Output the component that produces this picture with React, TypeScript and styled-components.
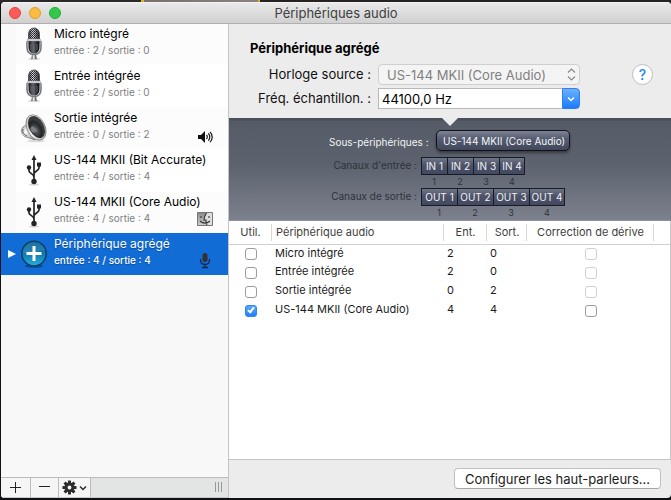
import React from "react";
import styled, { createGlobalStyle, css } from "styled-components";

const GlobalStyle = createGlobalStyle`
  *, *::before, *::after { box-sizing: border-box; }
  body {
    margin: 0;
    background: #17181a;
    font-family: Inter, "Liberation Sans", sans-serif;
    font-size: 13px;
    color: #1a1a1a;
  }
  button, input, select { font: inherit; color: inherit; margin: 0; }
`;

const Desktop = styled.div`
  min-height: 100vh;
  padding: 2px 0 2px 1px;
  display: flex;
  background: linear-gradient(90deg, #2a2a2b 141px, #e0b020 141px, #e0b020 144px, #77706b 144px, #8a827c 258px, #e0b020 258px, #e0b020 260px, #242322 260px) top / 100% 3px no-repeat, #101114;
`;

const Window = styled.main`
  flex: 1;
  min-width: 0;
  display: flex;
  flex-direction: column;
  border-radius: 4px;
  overflow: hidden;
  background: #ececec;
`;

const TitleBar = styled.header`
  position: relative;
  z-index: 1;
  flex: none;
  height: 22px;
  display: grid;
  grid-template-columns: 1fr auto 1fr;
  align-items: center;
  padding: 0 8px;
  background: linear-gradient(#e9e9e9, #d0d0d0);
  border-top: 1px solid #f4f4f4;
  border-bottom: 1px solid #b0b0b0;
`;

const Lights = styled.div`
  display: flex;
  gap: 8px;
`;

const Light = styled.button<{ $fill: string; $edge: string }>`
  width: 12px;
  height: 12px;
  padding: 0;
  border-radius: 50%;
  border: 1px solid ${(p) => p.$edge};
  background: ${(p) => p.$fill};
`;

const Title = styled.h1`
  margin: 0;
  font-size: 13px;
  line-height: 16px;
  font-weight: 400;
  color: #404040;
`;

const Body = styled.div`
  flex: 1;
  min-height: 0;
  display: flex;
`;

const Sidebar = styled.nav`
  flex: 0 0 228px;
  min-width: 0;
  display: flex;
  flex-direction: column;
  background: #f8f8f8;
  border-right: 1px solid #c4c4c4;
`;

const DeviceList = styled.ul`
  flex: 1;
  margin: -1px 0 0;
  padding: 0;
  list-style: none;
`;

const DeviceItem = styled.li<{ $selected: boolean; $shaded: boolean }>`
  height: 42px;
  display: grid;
  grid-template-columns: 15px 36px minmax(0, 1fr) 16px;
  padding-right: 15px;
  background: linear-gradient(90deg, #f9f9f9 15px, ${(p) => (p.$shaded ? "#fcfcfc" : "#ffffff")} 15px);
  color: #000;
  ${(p) =>
    p.$selected &&
    css`
      background: #116cd6;
      color: #fff;
      text-shadow: 0 1px 1px rgba(0, 0, 0, 0.3);
    `}
`;

const Disclosure = styled.span`
  display: flex;
  align-items: center;
  justify-content: flex-end;
`;

const IconCell = styled.span`
  display: flex;
  align-items: center;
  justify-content: center;
`;

const DeviceText = styled.div`
  padding: 3px 0 0 2px;
  white-space: nowrap;
`;

const DeviceName = styled.div`
  font-size: 12px;
  line-height: 16px;
`;

const DeviceInfo = styled.div<{ $selected: boolean }>`
  font-size: 10px;
  line-height: 16px;
  color: ${(p) => (p.$selected ? "#fff" : "#808080")};
  font-weight: ${(p) => (p.$selected ? 500 : 400)};
`;

const StatusCell = styled.span`
  display: flex;
  align-items: flex-end;
  justify-content: center;
  padding-bottom: 6px;
`;

const Toolbar = styled.div`
  flex: none;
  height: 21px;
  display: flex;
  border-top: 1px solid #bcbcbc;
  border-bottom: 1px solid #c8c8c8;
  background: #e3e5e4;
`;

const ToolButton = styled.button<{ $width: number }>`
  width: ${(p) => p.$width}px;
  padding: 0;
  display: flex;
  align-items: center;
  justify-content: center;
  gap: 2px;
  border: 0;
  border-right: 1px solid #bcbcbc;
  background: #f5f5f5;
`;

const Grip = styled.span`
  width: 7px;
  height: 10px;
  margin: 4px 6px 0 auto;
  border-left: 1px solid #999;
  border-right: 1px solid #999;
  background: linear-gradient(#999, #999) center / 1px 100% no-repeat;
`;

const Detail = styled.section`
  flex: 1;
  min-width: 0;
  display: flex;
  flex-direction: column;
`;

const Settings = styled.form`
  flex: none;
  height: 94px;
  padding: 16px 18px 0 21px;
`;

const Heading = styled.h2`
  margin: 0 0 8px;
  font-size: 13px;
  line-height: 16px;
  font-weight: 700;
  color: #000;
`;

const Fields = styled.div`
  display: grid;
  grid-template-columns: 121px 202px 1fr;
  column-gap: 7px;
  row-gap: 3px;
  align-items: center;
`;

const FieldLabel = styled.label`
  text-align: right;
  line-height: 21px;
  color: #101010;
  white-space: nowrap;
`;

const SelectBox = styled.div`
  display: grid;
  align-items: center;
  > * { grid-area: 1 / 1; }
  > svg { justify-self: end; margin-right: 4px; pointer-events: none; }
`;

const ClockSelect = styled.select`
  appearance: none;
  width: 100%;
  height: 21px;
  padding: 0 20px 0 8px;
  border: 1px solid #cfcfcf;
  border-radius: 4px;
  background: #f4f4f4;
  color: #808080;
  opacity: 1;
`;

const ComboBox = styled.div`
  display: flex;
  height: 21px;
`;

const RateInput = styled.input`
  flex: 1;
  min-width: 0;
  padding: 0 3px;
  border: 1px solid #b8b8b8;
  border-right: 0;
  border-radius: 0;
  background: #fff;
  color: #000;
  outline: 0;
`;

const ComboButton = styled.button`
  width: 18px;
  padding: 0;
  display: flex;
  align-items: center;
  justify-content: center;
  border: 1px solid #2f7ff0;
  border-radius: 0 4px 4px 0;
  background: linear-gradient(#6bb1fa, #1a7cfc);
`;

const HelpButton = styled.button`
  justify-self: end;
  width: 21px;
  height: 21px;
  padding: 0;
  border: 1px solid #bdbdbd;
  border-radius: 50%;
  background: #fff;
  color: #1a82fb;
  font-size: 14px;
  line-height: 18px;
  font-weight: 500;
`;

const Channels = styled.div`
  position: relative;
  flex: none;
  height: 103px;
  padding: 12px 8px 0 96px;
  display: grid;
  grid-template-columns: max-content 1fr;
  grid-template-rows: 27px 31px 31px;
  background: linear-gradient(#444b57, #555b67 4px, #5c626e 45%, #7c818d);
  border-bottom: 1px solid #8d919b;
  color: #2e323b;
  font-size: 10px;
  white-space: nowrap;
`;

const Pointer = styled.svg`
  position: absolute;
  top: 0;
  left: 213px;
`;

const ChannelLabel = styled.span<{ $main?: boolean }>`
  min-width: ${(p) => (p.$main ? 107 : 96)}px;
  padding-right: ${(p) => (p.$main ? 0 : 15)}px;
  line-height: ${(p) => (p.$main ? 24 : 16)}px;
  text-align: ${(p) => (p.$main ? "left" : "right")};
  color: ${(p) => (p.$main ? "#f2f3f5" : "inherit")};
  padding-left: ${(p) => (p.$main ? 4 : 0)}px;
`;

const SubDevice = styled.button`
  justify-self: start;
  margin-left: 4px;
  height: 21px;
  padding: 0 4px 0 6px;
  border: 1px solid #10131a;
  border-radius: 5px;
  background: linear-gradient(#7d8494, #565d70 40%, #41475c);
  box-shadow: 0 2px 3px rgba(0, 0, 0, 0.4);
  color: #f4f5f8;
  font-size: 10px;
  line-height: 18px;
`;

const Plugs = styled.div<{ $cell: number }>`
  margin-left: -11px;
  justify-self: start;
  display: grid;
  grid-template-columns: repeat(4, ${(p) => p.$cell}px);
  text-align: center;
`;

const Plug = styled.span`
  height: 18px;
  line-height: 16px;
  border: 1px solid #171b23;
  border-right-width: 0;
  background: linear-gradient(#6f7687, #4d5468 45%, #424860);
  color: #f0f1f4;
  &:nth-child(4) { border-right-width: 1px; }
`;

const PlugNumber = styled.span`
  font-size: 9px;
  line-height: 13px;
`;

const TablePane = styled.div`
  flex: 1;
  background: #fff;
  border-right: 1px solid #c8c8c8;
  border-bottom: 1px solid #c4c4c4;
`;

const Table = styled.table`
  width: 100%;
  table-layout: fixed;
  border-collapse: collapse;
  font-size: 11px;
`;

const Column = styled.col<{ $width?: number }>`
  width: ${(p) => (p.$width ? `${p.$width}px` : "auto")};
`;

const HeadCell = styled.th<{ $left?: boolean }>`
  height: 23px;
  padding: 0 4px;
  font-weight: 400;
  color: #404040;
  white-space: nowrap;
  text-align: ${(p) => (p.$left ? "left" : "center")};
  border-bottom: 1px solid #d0d0d0;
  background: linear-gradient(#d8d8d8, #d8d8d8) right center / 1px 17px no-repeat;
  &:last-child { background: none; }
`;

const Cell = styled.td<{ $center?: boolean }>`
  height: 19px;
  padding: 0 3px;
  line-height: 16px;
  vertical-align: ${(p) => (p.$center ? "bottom" : "top")};
  text-align: ${(p) => (p.$center ? "center" : "left")};
  white-space: nowrap;
`;

const Check = styled.input`
  appearance: none;
  display: block;
  width: 12px;
  height: 12px;
  margin: 0 auto 3px;
  border: 1px solid #9c9c9c;
  border-radius: 3px;
  background: #fff;
  &:disabled { border-color: #d0d0d0; }
  &:checked {
    border-color: #2f83f5;
    background: linear-gradient(#5aa9fa, #1f7ffb);
  }
  &:checked::after {
    content: "";
    display: block;
    width: 4px;
    height: 7px;
    margin: 0 auto;
    border: solid #fff;
    border-width: 0 2px 2px 0;
    transform: rotate(38deg);
  }
`;

const Footer = styled.footer`
  flex: none;
  height: 38px;
  display: flex;
  justify-content: flex-end;
  align-items: flex-start;
  padding: 8px 10px 0;
`;

const SpeakerButton = styled.button`
  height: 21px;
  min-width: 207px;
  padding: 0 8px;
  border: 1px solid #c0c0c0;
  border-bottom-color: #a8a8a8;
  border-radius: 4px;
  background: #fff;
  line-height: 18px;
  white-space: nowrap;
`;

const MicIcon = () => (
  <svg width="20" height="34" viewBox="0 0 20 34">
    <defs>
      <linearGradient id="micMetal" x1="0" x2="1">
        <stop offset="0" stopColor="#3c3d42" />
        <stop offset="0.4" stopColor="#e3e4e8" />
        <stop offset="1" stopColor="#26272b" />
      </linearGradient>
      <linearGradient id="micBody" x1="0" x2="1">
        <stop offset="0" stopColor="#111216" />
        <stop offset="0.4" stopColor="#62646d" />
        <stop offset="1" stopColor="#050507" />
      </linearGradient>
      <pattern id="micMesh" width="2" height="2" patternUnits="userSpaceOnUse">
        <rect width="1" height="1" fill="#202126" />
        <rect x="1" y="1" width="1" height="1" fill="#36383e" />
      </pattern>
    </defs>
    <ellipse cx="10" cy="32" rx="6" ry="1.2" fill="#d4d4d4" />
    <path d="M8 27h4l.6 5H7.400z" fill="url(#micMetal)" />
    <path d="M9.500 27h1v5h-1z" fill="#ddd" />
    <path d="M3 15v5c0 5 3 7.500 7 7.500s7-2.500 7-7.500v-5" fill="none" stroke="#77797f" strokeWidth="1.600" />
    <path d="M2 14h2.500v3H2zM15.500 14H18v3h-2.500z" fill="#9b9da3" />
    <path d="M4.500 8C4.500 3.500 6.500 1 10 1s5.500 2.500 5.500 7v5h-11z" fill="url(#micMetal)" />
    <path d="M4.500 8C4.500 3.500 6.500 1 10 1s5.500 2.500 5.500 7v4h-11z" fill="url(#micMesh)" stroke="#4a4b50" strokeWidth="0.8" />
    <path d="M4.500 14h11v6c0 4-2 6.500-5.500 6.500S4.500 24 4.500 20z" fill="url(#micBody)" />
    <path d="M7 17v6M10 17v8M13 17v6" stroke="#74767e" strokeWidth="0.7" />
    <path d="M3.500 12h13v2h-13z" fill="#dadbe0" stroke="#85878d" strokeWidth="0.4" />
  </svg>
);

const SpeakerIcon = () => (
  <svg width="28" height="30" viewBox="0 0 28 30">
    <defs>
      <linearGradient id="spkRim" x1="0" y1="0" x2="1" y2="1">
        <stop offset="0" stopColor="#9a9a9a" />
        <stop offset="0.4" stopColor="#fafafa" />
        <stop offset="1" stopColor="#858585" />
      </linearGradient>
      <radialGradient id="spkCone" cx="0.35" cy="0.6">
        <stop offset="0" stopColor="#8b8e91" />
        <stop offset="0.3" stopColor="#4a4c4f" />
        <stop offset="0.75" stopColor="#222427" />
        <stop offset="1" stopColor="#3a3c3f" />
      </radialGradient>
    </defs>
    <ellipse cx="16" cy="28" rx="9" ry="1.300" fill="#ddd" />
    <path d="M8 11 3 14c-3 3-1 9 3 10l9 3z" fill="url(#spkRim)" stroke="#777" strokeWidth="0.8" />
    <path d="M3 16c-1 3 1 6 4 7" fill="none" stroke="#555" />
    <ellipse cx="16" cy="14.500" rx="9" ry="13.500" transform="rotate(-27 16 14.500)" fill="url(#spkRim)" stroke="#777" strokeWidth="0.7" />
    <ellipse cx="16.500" cy="14" rx="7.400" ry="11.800" transform="rotate(-27 16.500 14)" fill="url(#spkCone)" />
    <ellipse cx="13" cy="16.500" rx="2.300" ry="3.200" transform="rotate(-27 13 16.500)" fill="#7b7e81" />
  </svg>
);

const UsbIcon = () => (
  <svg width="18" height="32" viewBox="0 0 18 32">
    <ellipse cx="9" cy="30.500" rx="5" ry="1" fill="#d6d6d6" />
    <path d="M9 5v22M4 14v3c0 2 5 3 5 6M14 11v3c0 2.500-5 3.500-5 6" fill="none" stroke="#222326" strokeWidth="1.700" />
    <path d="m9 1 2.500 5h-5z" fill="#222326" />
    <circle cx="9" cy="27.500" r="2.700" fill="#222326" />
    <circle cx="4" cy="13.500" r="2.200" fill="#222326" />
    <path d="M12 8.500h4v4h-4z" fill="#222326" />
  </svg>
);

const AggregateIcon = () => (
  <svg width="28" height="30" viewBox="0 0 28 30">
    <defs>
      <linearGradient id="aggFill" x1="0" y1="0" x2="0" y2="1">
        <stop offset="0" stopColor="#0c5684" />
        <stop offset="0.5" stopColor="#1277ae" />
        <stop offset="1" stopColor="#22b1dd" />
      </linearGradient>
    </defs>
    <ellipse cx="14" cy="27" rx="9" ry="1.800" fill="#07499a" />
    <circle cx="14" cy="14.500" r="12.300" fill="url(#aggFill)" stroke="#093c60" strokeWidth="1.300" />
    <path d="M3 12C5 5 10 3 14 3c5 0 10 3 11 9-7-2-14 4-22 2z" fill="#5ab7dc" opacity="0.25" />
    <path d="M14 7v15M6.500 14.500h15" stroke="#fff" strokeWidth="3" />
  </svg>
);

const VolumeIcon = () => (
  <svg width="15" height="12" viewBox="0 0 15 12">
    <path d="M0 4h3l4-4v12L3 8H0z" fill="#111" />
    <path d="M8.500 4c1 1 1 3 0 4M10.300 2.300c2 2 2 5.400 0 7.400M12 .8c3 3 3 7.400 0 10.400" fill="none" stroke="#111" strokeWidth="1.200" />
  </svg>
);

const FinderIcon = () => (
  <svg width="16" height="15" viewBox="0 0 16 15">
    <defs>
      <linearGradient id="finderFace" x1="0" y1="0" x2="0" y2="1">
        <stop offset="0" stopColor="#888" />
        <stop offset="1" stopColor="#d0d0d0" />
      </linearGradient>
    </defs>
    <path d="M.5.5h15v13H.5z" fill="url(#finderFace)" stroke="#777" />
    <path d="M9.500 1C7.500 4 7 6 7 8h2c0 2 .2 4 1 5h5V1z" fill="#dedede" />
    <path d="M9.500 1C7.500 4 7 6 7 8h2c0 2 .2 4 1 5M4 4v2M12 4v2M3 9c3 2.500 7 2.500 10 0" fill="none" stroke="#333" strokeWidth="1.100" />
  </svg>
);

const SmallMicIcon = () => (
  <svg width="12" height="17" viewBox="0 0 12 17">
    <rect x="3.500" y="1" width="5" height="9" rx="2.500" fill="#34312f" />
    <path d="M1.500 7v1c0 3 2 4.500 4.500 4.500S10.500 11 10.500 8V7M6 12v3M3 15.500h6" fill="none" stroke="#102746" strokeWidth="1.300" />
  </svg>
);

const GearIcon = () => (
  <svg width="15" height="15" viewBox="0 0 15 15">
    {[0, 45, 90, 135].map((angle) => (
      <rect key={angle} x="6" y="0.500" width="3" height="14" rx="0.500" fill="#2c2c2c" transform={`rotate(${angle} 7.500 7.500)`} />
    ))}
    <circle cx="7.500" cy="7.500" r="5" fill="#2c2c2c" />
    <circle cx="7.500" cy="7.500" r="1.900" fill="#f5f5f5" />
  </svg>
);

const Chevron = ({ color }: { color: string }) => (
  <svg width="8" height="6" viewBox="0 0 8 6">
    <path d="m1 1.500 3 3 3-3" fill="none" stroke={color} strokeWidth="1.500" />
  </svg>
);

const devices = [
  { name: "Micro intégré", input: 2, output: 0, icon: <MicIcon /> },
  { name: "Entrée intégrée", input: 2, output: 0, icon: <MicIcon /> },
  { name: "Sortie intégrée", input: 0, output: 2, icon: <SpeakerIcon />, status: <VolumeIcon /> },
  { name: "US-144 MKII (Bit Accurate)", input: 4, output: 4, icon: <UsbIcon /> },
  { name: "US-144 MKII (Core Audio)", input: 4, output: 4, icon: <UsbIcon />, status: <FinderIcon /> },
  { name: "Périphérique agrégé", input: 4, output: 4, icon: <AggregateIcon />, status: <SmallMicIcon />, selected: true },
];

const members = [
  { name: "Micro intégré", input: 2, output: 0, used: false },
  { name: "Entrée intégrée", input: 2, output: 0, used: false },
  { name: "Sortie intégrée", input: 0, output: 2, used: false },
  { name: "US-144 MKII (Core Audio)", input: 4, output: 4, used: true },
];

const PlugRow = ({ prefix, cell }: { prefix: string; cell: number }) => (
  <Plugs $cell={cell}>
    {[1, 2, 3, 4].map((n) => (
      <Plug key={n}>{`${prefix} ${n}`}</Plug>
    ))}
    {[1, 2, 3, 4].map((n) => (
      <PlugNumber key={n}>{n}</PlugNumber>
    ))}
  </Plugs>
);

export default function App() {
  return (
    <>
      <GlobalStyle />
      <Desktop>
        <Window>
          <TitleBar>
            <Lights>
              <Light $fill="#fc5b57" $edge="#e2443f" aria-label="Fermer" />
              <Light $fill="#fdbc40" $edge="#e0a02c" aria-label="Réduire" />
              <Light $fill="#34c84a" $edge="#24ab38" aria-label="Agrandir" />
            </Lights>
            <Title>Périphériques audio</Title>
          </TitleBar>
          <Body>
            <Sidebar>
              <DeviceList>
                {devices.map((d, i) => (
                  <DeviceItem key={d.name} $selected={!!d.selected} $shaded={i % 2 === 0}>
                    <Disclosure>
                      {d.selected && (
                        <svg width="8" height="10" viewBox="0 0 8 10">
                          <path d="M0 1v8l8-4z" fill="#fff" />
                        </svg>
                      )}
                    </Disclosure>
                    <IconCell>{d.icon}</IconCell>
                    <DeviceText>
                      <DeviceName>{d.name}</DeviceName>
                      <DeviceInfo $selected={!!d.selected}>{`entrée : ${d.input} / sortie : ${d.output}`}</DeviceInfo>
                    </DeviceText>
                    <StatusCell>{d.status}</StatusCell>
                  </DeviceItem>
                ))}
              </DeviceList>
              <Toolbar>
                <ToolButton $width={30} aria-label="Ajouter">
                  <svg width="11" height="11" viewBox="0 0 11 11"><path d="M5.500 0v11M0 5.500h11" stroke="#222" /></svg>
                </ToolButton>
                <ToolButton $width={28} aria-label="Supprimer">
                  <svg width="11" height="11" viewBox="0 0 11 11"><path d="M0 4.500h11" stroke="#222" /></svg>
                </ToolButton>
                <ToolButton $width={32} aria-label="Actions">
                  <GearIcon />
                  <Chevron color="#2c2c2c" />
                </ToolButton>
                <Grip />
              </Toolbar>
            </Sidebar>
            <Detail>
              <Settings onSubmit={(e) => e.preventDefault()}>
                <Heading>Périphérique agrégé</Heading>
                <Fields>
                  <FieldLabel htmlFor="clock">Horloge source :</FieldLabel>
                  <SelectBox>
                    <ClockSelect id="clock" disabled>
                      <option>US-144 MKII (Core Audio)</option>
                    </ClockSelect>
                    <svg width="9" height="13" viewBox="0 0 9 13">
                      <path d="m1 4.500 3.500-3.500L8 4.500M1 8.500 4.500 12 8 8.500" fill="none" stroke="#8a8a8a" strokeWidth="1.200" />
                    </svg>
                  </SelectBox>
                  <HelpButton type="button">?</HelpButton>
                  <FieldLabel htmlFor="rate">Fréq. échantillon. :</FieldLabel>
                  <ComboBox>
                    <RateInput id="rate" defaultValue="44100,0 Hz" />
                    <ComboButton type="button" aria-label="Choisir la fréquence">
                      <Chevron color="#fff" />
                    </ComboButton>
                  </ComboBox>
                </Fields>
              </Settings>
              <Channels>
                <Pointer width="16" height="8" viewBox="0 0 16 8">
                  <path d="M0 0h16L8 8z" fill="#ececec" />
                </Pointer>
                <ChannelLabel $main>Sous-périphériques :</ChannelLabel>
                <SubDevice>US-144 MKII (Core Audio)</SubDevice>
                <ChannelLabel>Canaux d'entrée :</ChannelLabel>
                <PlugRow prefix="IN" cell={26} />
                <ChannelLabel>Canaux de sortie :</ChannelLabel>
                <PlugRow prefix="OUT" cell={36} />
              </Channels>
              <TablePane>
                <Table>
                  <colgroup>
                    <Column $width={43} />
                    <Column />
                    <Column $width={43} />
                    <Column $width={40} />
                    <Column $width={127} />
                    <Column $width={16} />
                  </colgroup>
                  <thead>
                    <tr>
                      <HeadCell>Util.</HeadCell>
                      <HeadCell $left>Périphérique audio</HeadCell>
                      <HeadCell>Ent.</HeadCell>
                      <HeadCell>Sort.</HeadCell>
                      <HeadCell>Correction de dérive</HeadCell>
                      <HeadCell />
                    </tr>
                  </thead>
                  <tbody>
                    {members.map((m) => (
                      <tr key={m.name}>
                        <Cell $center>
                          <Check type="checkbox" defaultChecked={m.used} aria-label={`Utiliser ${m.name}`} />
                        </Cell>
                        <Cell>{m.name}</Cell>
                        <Cell>{m.input}</Cell>
                        <Cell>{m.output}</Cell>
                        <Cell $center>
                          <Check type="checkbox" disabled={!m.used} aria-label={`Correction de dérive ${m.name}`} />
                        </Cell>
                        <Cell />
                      </tr>
                    ))}
                  </tbody>
                </Table>
              </TablePane>
              <Footer>
                <SpeakerButton>Configurer les haut-parleurs...</SpeakerButton>
              </Footer>
            </Detail>
          </Body>
        </Window>
      </Desktop>
    </>
  );
}
